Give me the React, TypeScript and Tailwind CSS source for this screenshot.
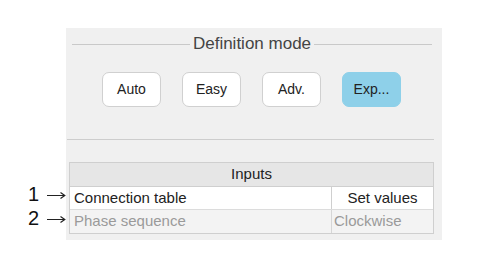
const modes = ['Auto', 'Easy', 'Adv.', 'Exp...'];

function Arrow() {
  return (
    <svg width="19" height="9" viewBox="0 0 19 9" className="mt-[2px]">
      <path d="M0 4.5H17.5M13.5 1.5L17.8 4.5L13.5 7.5" fill="none" stroke="#222" strokeWidth="1.2" />
    </svg>
  );
}

export default function App() {
  return (
    <div className="w-[478px] h-[265px] bg-white relative font-['Liberation_Sans',Arial,sans-serif]">
      <div className="absolute left-[66px] top-[28px] w-[376px] h-[212px] bg-[#f0f0f0] flex flex-col">
        {/* legend */}
        <div className="flex items-center h-[18px] mt-[7px] pl-[6px] pr-[10px]">
          <div className="flex-1 h-px bg-[#c9c9c9]" />
          <span className="px-[3px] text-[17px] leading-[18px] text-[#444]">Definition mode</span>
          <div className="flex-1 h-px bg-[#c9c9c9]" />
        </div>
        <div className="flex gap-[21px] pl-[36px] mt-[19px]">
          {modes.map((m, i) => (
            <div
              key={m}
              className={`w-[59px] h-[35px] rounded-[7px] border flex items-center justify-center text-[14px] text-[#222] ${
                i === 3 ? 'bg-[#8ed0e9] border-[#8ed0e9]' : 'bg-white border-[#d0d0d0]'
              }`}
            >
              {m}
            </div>
          ))}
        </div>
        <div className="h-px bg-[#cdcdcd] mt-[32px] ml-[1px] mr-[8px]" />
        <div className="mt-[22px] ml-[3px] mr-[8px] border border-[#cfcfcf] text-[15px]">
          <div className="h-[24px] bg-[#e6e6e6] border-b border-[#cfcfcf] flex items-center justify-center text-[#222]">
            Inputs
          </div>
          <div className="flex h-[23px] bg-white border-b border-[#dcdcdc]">
            <div className="flex-1 flex items-center pl-[4px] text-[#222]">Connection table</div>
            <div className="w-[102px] border-l border-[#cfcfcf] flex items-center justify-center text-[#222]">
              Set values
            </div>
          </div>
          <div className="flex h-[23px] bg-[#f3f3f3] text-[#9a9a9a]">
            <div className="flex-1 flex items-center pl-[4px]">Phase sequence</div>
            <div className="w-[102px] border-l border-[#d6d6d6] flex items-center pl-[2px]">Clockwise</div>
          </div>
        </div>
      </div>
      <div className="absolute left-[28px] top-[184px] text-[20px] leading-[21px] text-[#111] flex flex-col gap-[3px]">
        <div className="flex items-center gap-[8px]">
          <span>1</span>
          <Arrow />
        </div>
        <div className="flex items-center gap-[8px]">
          <span>2</span>
          <Arrow />
        </div>
      </div>
    </div>
  );
}
